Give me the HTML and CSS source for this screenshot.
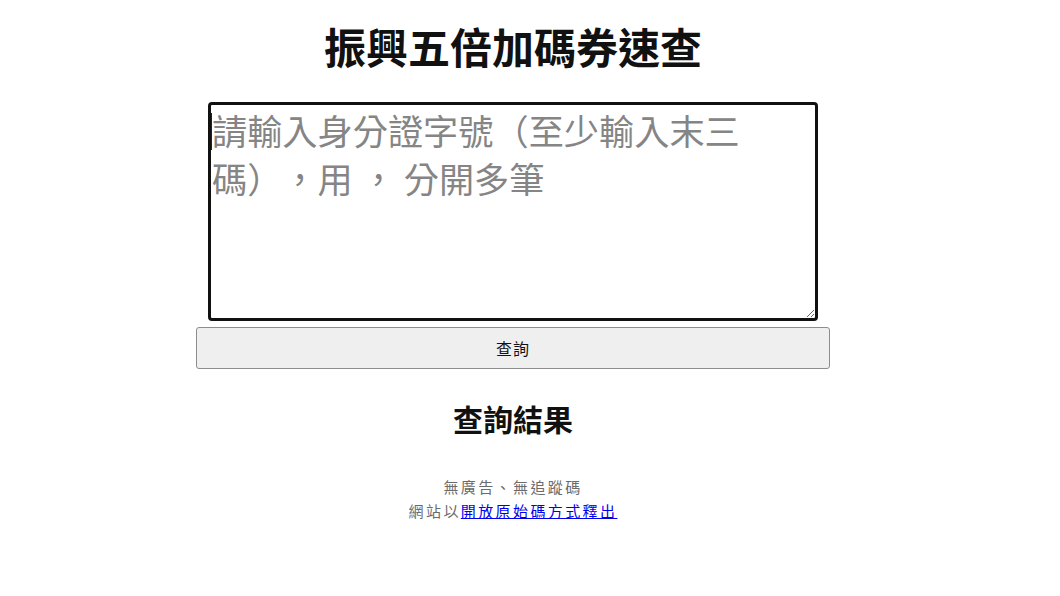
FILE: index.html
```html
<!DOCTYPE html>
<html lang="zh-Hant">
<head>
<meta charset="utf-8">
<title>振興五倍加碼券速查</title>
<link rel="stylesheet" href="styles.css">
</head>
<body>
<main class="page">
  <h1 class="title">振興五倍加碼券速查</h1>
  <div class="input-wrap">
    <textarea class="ids" placeholder="請輸入身分證字號（至少輸入末三碼），用 ， 分開多筆"></textarea>
    <span class="caret"></span>
  </div>
  <button class="query" type="button">查詢</button>
  <h2 class="result-title">查詢結果</h2>
  <footer class="foot">
    <p class="foot-line">無廣告、無追蹤碼</p>
    <p class="foot-line">網站以<a class="foot-link" href="#">開放原始碼方式釋出</a></p>
  </footer>
</main>
</body>
</html>
```

FILE: styles.css
```css
html, body {
  margin: 0;
  padding: 0;
  background: #ffffff;
}

body {
  font-family: "Noto Sans CJK TC", "Noto Sans", sans-serif;
  color: #111111;
  text-spacing-trim: space-all;
}

.page {
  box-sizing: border-box;
  width: 1026px;
  padding-top: 21px;
  display: flex;
  flex-direction: column;
  align-items: center;
}

.title {
  margin: 0;
  font-size: 42px;
  line-height: 50px;
  font-weight: 700;
  color: #111111;
}

.input-wrap {
  position: relative;
  margin-top: 31px;
  width: 610px;
  height: 219px;
}

.ids {
  display: block;
  box-sizing: border-box;
  width: 610px;
  height: 219px;
  margin: 0;
  border: 3px solid #111111;
  border-radius: 4px;
  padding: 1px 28px 2px 1px;
  font-family: "Noto Sans CJK TC", "Noto Sans", sans-serif;
  font-size: 35.2px;
  line-height: 48px;
  color: #111111;
  background: #ffffff;
  outline: none;
  resize: both;
  text-spacing-trim: space-all;
}

.ids::placeholder {
  color: #858585;
  text-spacing-trim: space-all;
}

.caret {
  position: absolute;
  left: 3px;
  top: 11px;
  width: 1px;
  height: 37px;
  background: #222222;
}

.query {
  box-sizing: border-box;
  width: 634px;
  height: 42px;
  margin-top: 6px;
  border: 1px solid #8d8d8d;
  border-radius: 3px;
  background: #efefef;
  font-family: "Noto Sans CJK TC", "Noto Sans", sans-serif;
  font-size: 16px;
  letter-spacing: 1px;
  color: #111111;
  padding: 0;
}

.result-title {
  margin: 29px 0 0;
  font-size: 30px;
  line-height: 40px;
  font-weight: 700;
  color: #111111;
}

.foot {
  margin-top: 37px;
  text-align: center;
}

.foot-line {
  margin: 0;
  font-size: 15px;
  line-height: 24px;
  letter-spacing: 2.4px;
  color: #6b6b6b;
}

.foot-link {
  color: #0000ee;
  text-decoration: underline;
}
```
